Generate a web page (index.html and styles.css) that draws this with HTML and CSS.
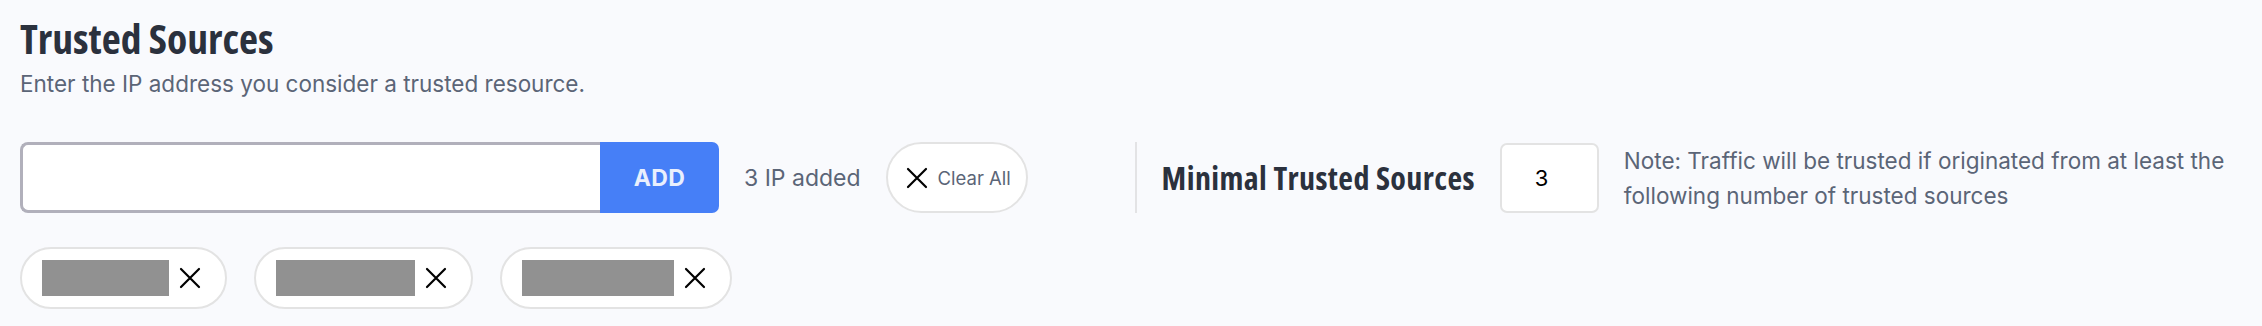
FILE: index.html
```html
<!DOCTYPE html>
<html lang="en">
<head>
<meta charset="utf-8">
<title>Trusted Sources</title>
<link rel="stylesheet" href="styles.css">
</head>
<body>
<div class="page">
  <h1 class="title">Trusted Sources</h1>
  <p class="subtitle">Enter the IP address you consider a trusted resource.</p>
  <div class="controls">
    <div class="ip-field">
      <input class="ip-input" type="text" aria-label="IP address">
      <button class="add-btn" type="button">ADD</button>
    </div>
    <span class="count">3 IP added</span>
    <button class="clear-btn" type="button">
      <svg class="x-icon" viewBox="0 0 22 22" width="22" height="22"><path d="M2 2 L20 20 M20 2 L2 20"/></svg>
      <span>Clear All</span>
    </button>
    <div class="divider"></div>
    <span class="min-label">Minimal Trusted Sources</span>
    <input class="min-input" type="text" value="3" aria-label="Minimal trusted sources">
    <p class="note">Note: Traffic will be trusted if originated from at least the following number of trusted sources</p>
  </div>
  <div class="chips">
    <div class="chip"><span class="redact redact-1"></span><svg class="x-icon" viewBox="0 0 22 22" width="22" height="22"><path d="M2 2 L20 20 M20 2 L2 20"/></svg></div>
    <div class="chip"><span class="redact redact-2"></span><svg class="x-icon" viewBox="0 0 22 22" width="22" height="22"><path d="M2 2 L20 20 M20 2 L2 20"/></svg></div>
    <div class="chip"><span class="redact redact-3"></span><svg class="x-icon" viewBox="0 0 22 22" width="22" height="22"><path d="M2 2 L20 20 M20 2 L2 20"/></svg></div>
  </div>
</div>
</body>
</html>
```

FILE: styles.css
```css
* { box-sizing: border-box; }
html, body { margin: 0; padding: 0; background: #f9fafd; }
body { font-family: Inter, "Noto Sans", sans-serif; color: #5b6577; }

.page { padding: 15px 20px 0 20px; }

.title {
  margin: 0;
  font-family: "Open Sans", sans-serif;
  font-stretch: 78%;
  font-weight: 700;
  font-size: 41.5px;
  line-height: 47px;
  color: #2b313d;
}

.subtitle {
  margin: 9px 0 0 0;
  font-size: 22.5px;
  line-height: 26px;
  color: #5b6577;
}

.controls {
  margin-top: 45px;
  height: 71px;
  display: flex;
  align-items: center;
  gap: 25px;
}

.ip-field { display: flex; height: 71px; }

.ip-input {
  width: 580px;
  height: 71px;
  border: 3px solid #b1b0bb;
  border-right: none;
  border-radius: 8px 0 0 8px;
  background: #fff;
  outline: none;
  padding: 0 16px;
  font-size: 20px;
  font-family: inherit;
}

.add-btn {
  width: 119px;
  height: 71px;
  border: none;
  border-radius: 0 7px 7px 0;
  background: #467ff7;
  color: #e9effd;
  font-family: Inter, sans-serif;
  font-weight: 700;
  font-size: 23px;
  letter-spacing: 0.3px;
  padding: 0;
}

.count { font-size: 23px; color: #5b6577; white-space: nowrap; }

.clear-btn {
  display: flex;
  align-items: center;
  gap: 10px;
  width: 142px;
  height: 71px;
  padding: 0 0 0 18px;
  border: 2px solid #e3e3e3;
  border-radius: 36px;
  background: #fff;
  font-family: Inter, sans-serif;
  font-size: 18.5px;
  color: #5b6577;
  white-space: nowrap;
}

.x-icon { flex: none; display: block; }
.x-icon path { stroke: #000; stroke-width: 2.2; fill: none; stroke-linecap: round; }

.divider {
  width: 2px;
  height: 71px;
  background: #e3e3e5;
  margin-left: 82px;
}

.min-label {
  font-family: "Open Sans", sans-serif;
  font-stretch: 78%;
  font-weight: 700;
  font-size: 32px;
  letter-spacing: 0.4px;
  color: #2b313d;
  white-space: nowrap;
}

.min-input {
  width: 99px;
  height: 70px;
  border: 2px solid #e3e3e3;
  border-radius: 7px;
  background: #fff;
  padding: 0 0 0 33px;
  font-family: Inter, sans-serif;
  font-size: 22px;
  color: #000;
  outline: none;
}

.note {
  flex: 1;
  margin: 0;
  font-size: 22.5px;
  line-height: 35px;
  color: #5b6577;
}

.chips {
  margin-top: 34px;
  display: flex;
  gap: 27px;
}

.chip {
  display: flex;
  align-items: center;
  height: 62px;
  padding: 0 24px 0 20px;
  gap: 10px;
  border: 2px solid #e3e3e3;
  border-radius: 31px;
  background: #fff;
}

.redact { display: block; height: 36px; background: #919191; }
.redact-1 { width: 127px; }
.redact-2 { width: 139px; }
.redact-3 { width: 152px; }
```
